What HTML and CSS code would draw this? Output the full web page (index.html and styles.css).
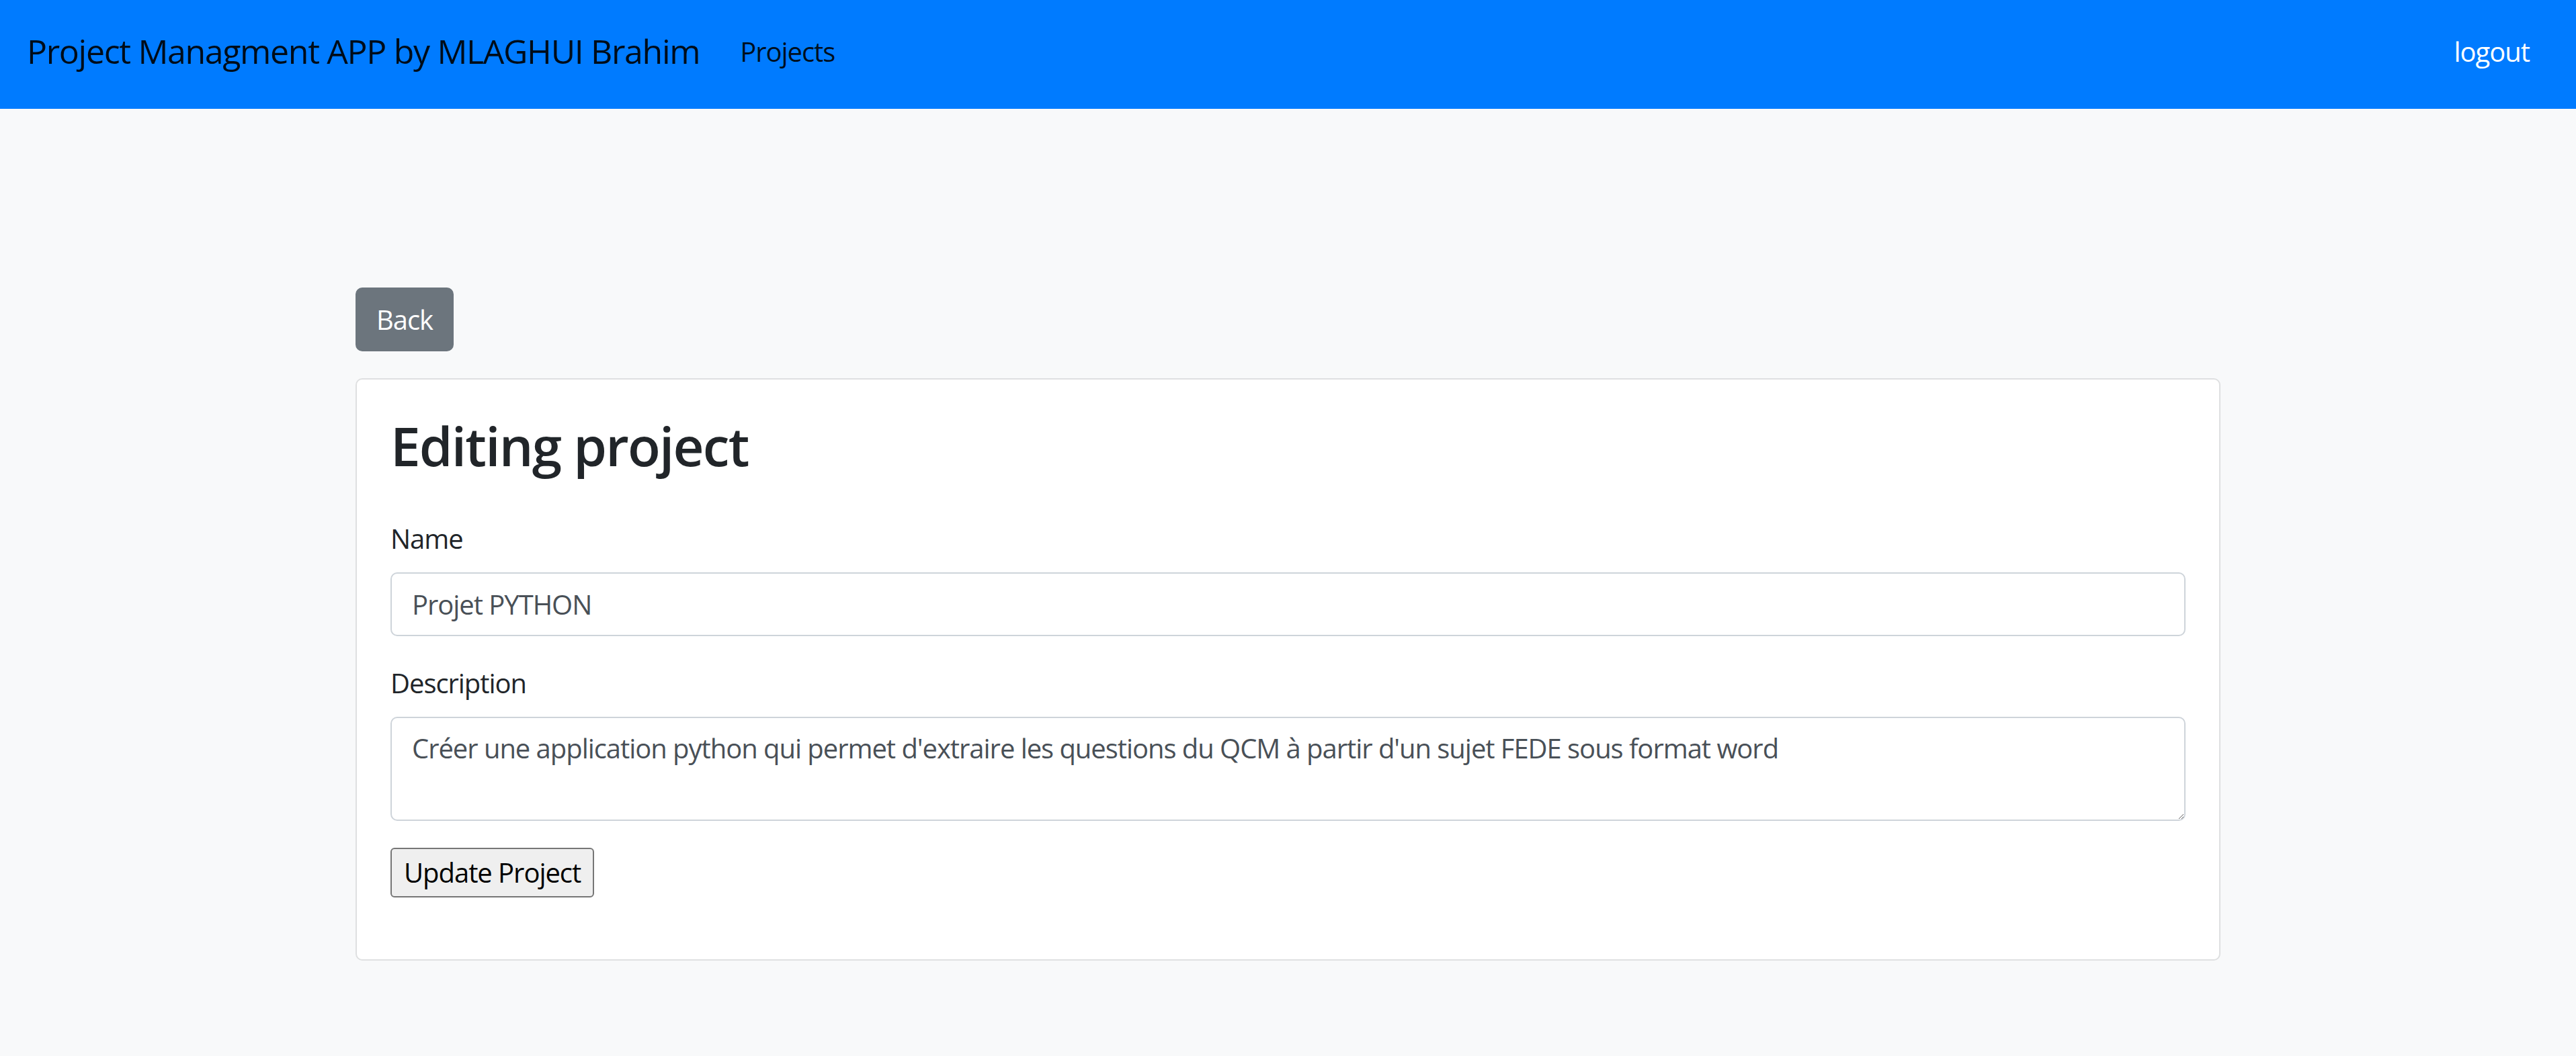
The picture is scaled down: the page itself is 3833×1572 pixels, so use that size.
FILE: index.html
```html
<!DOCTYPE html>
<html lang="fr">
<head>
<meta charset="utf-8">
<title>Project Managment APP</title>
<link rel="stylesheet" href="styles.css">
</head>
<body>
<nav class="navbar">
  <a class="brand" href="#">Project Managment APP by MLAGHUI Brahim</a>
  <a class="nav-link" href="#">Projects</a>
  <a class="nav-link logout" href="#">logout</a>
</nav>
<main class="container">
  <div class="back-row">
    <a class="btn-back" href="#">Back</a>
  </div>
  <div class="card">
    <h2 class="card-title">Editing project</h2>
    <form class="form">
      <div class="form-group">
        <label class="form-label" for="name">Name</label>
        <input class="form-control" id="name" type="text" value="Projet PYTHON">
      </div>
      <div class="form-group">
        <label class="form-label" for="desc">Description</label>
        <textarea class="form-control textarea" id="desc" rows="2">Créer une application python qui permet d'extraire les questions du QCM à partir d'un sujet FEDE sous format word</textarea>
      </div>
      <button class="btn-submit" type="button">Update Project</button>
    </form>
  </div>
</main>
</body>
</html>
```

FILE: styles.css
```css
html, body {
  margin: 0;
  padding: 0;
}

body {
  background: #f8f9fa;
  font-family: "Open Sans", "Noto Sans", sans-serif;
  font-size: 40px;
  line-height: 60px;
  color: #212529;
  letter-spacing: -1.05px;
}

a {
  text-decoration: none;
}

.navbar {
  box-sizing: border-box;
  height: 162px;
  display: flex;
  align-items: center;
  padding: 0 49px 9px 40px;
  background: #007bff;
}

.brand {
  font-size: 50px;
  line-height: 75px;
  margin-right: 40px;
  letter-spacing: -1.33px;
  color: rgba(0, 0, 0, 0.9);
}

.nav-link {
  padding: 0 20px;
  line-height: 60px;
  color: rgba(0, 0, 0, 0.9);
}

.logout {
  margin-left: auto;
  color: #fff;
}

.container {
  width: 2775px;
  margin: 0 auto;
  padding-top: 266px;
}

.back-row {
  display: flex;
}

.btn-back {
  box-sizing: border-box;
  height: 95px;
  line-height: 95px;
  padding: 0 30px;
  min-width: 146px;
  text-align: center;
  background: #6c757d;
  color: #fff;
  border-radius: 10px;
}

.card {
  box-sizing: border-box;
  margin-top: 40px;
  background: #fff;
  border: 2px solid #dfe0e1;
  border-radius: 10px;
  padding: 50px 50px 92px;
}

.card-title {
  margin: 0 0 61px;
  font-size: 80px;
  line-height: 96px;
  font-weight: 600;
  letter-spacing: -1.8px;
}

.form {
  margin: 0;
}

.form-group {
  margin-bottom: 40px;
}

.form-label {
  display: block;
  margin-bottom: 20px;
}

.form-control {
  box-sizing: border-box;
  display: block;
  width: 100%;
  height: 95px;
  padding: 0 30px;
  border: 2px solid #ced4da;
  border-radius: 10px;
  background: #fff;
  color: #495057;
  font-family: inherit;
  font-size: 40px;
  letter-spacing: -1.05px;
  line-height: 60px;
  margin: 0;
}

.textarea {
  height: 155px;
  padding: 15px 30px;
  resize: vertical;
}

.btn-submit {
  box-sizing: border-box;
  height: 74px;
  padding: 0 18px;
  margin: 0;
  background: #efefef;
  border: 2px solid #767676;
  border-radius: 6px;
  color: #000;
  font-family: inherit;
  font-size: 40px;
  letter-spacing: -1.05px;
  line-height: 60px;
}
```
